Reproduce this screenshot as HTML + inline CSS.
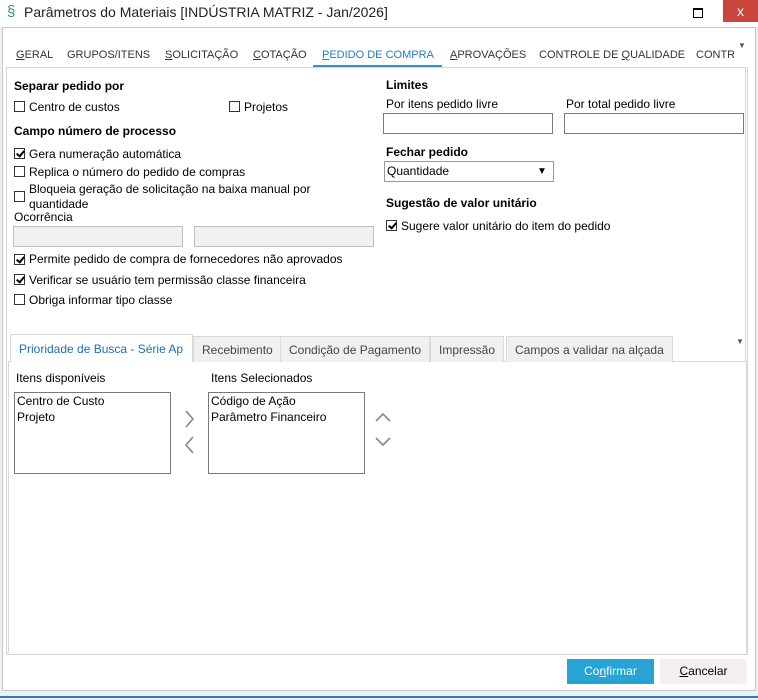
<!DOCTYPE html>
<html><head><meta charset="utf-8"><style>
*{margin:0;padding:0;box-sizing:border-box}
body{width:758px;height:700px;background:#f0f0f0;position:relative;overflow:hidden;font-family:"Liberation Sans",sans-serif;font-size:12px;color:#000}
.a{position:absolute;white-space:nowrap;line-height:16px}
.b{font-weight:bold}
.cb{position:absolute;width:11px;height:11px;border:1px solid #333;background:#fff}
.cb.k::after{content:"";position:absolute;left:3px;top:0px;width:3px;height:6px;border:solid #000;border-width:0 2px 2px 0;transform:rotate(40deg)}
.in{position:absolute;border:1px solid #7a7a7a;background:#fff}
.dis{position:absolute;border:1px solid #bfbfbf;background:#f0f0f0}
.tab{position:absolute;top:48px;color:#333;font-size:11px;white-space:nowrap;line-height:14px}
.st{position:absolute;top:336px;height:26px;border:1px solid #d9d9d9;border-bottom:none;background:#f0f0f0;color:#444;line-height:26px;padding:0 8px}
u{text-decoration:underline}
</style></head><body>
<div style="position:absolute;left:0;top:0;width:758px;height:27px;background:#fff"></div>
<div class="a" style="left:7px;top:4px;color:#2a9d5c;font-size:15px">§</div>
<div class="a" style="left:24px;top:4px;font-size:14px;color:#222">Parâmetros do Materiais [INDÚSTRIA MATRIZ - Jan/2026]</div>
<div style="position:absolute;left:693px;top:8px;width:10px;height:10px;border:1px solid #000;border-top-width:2px"></div>
<div style="position:absolute;left:723px;top:0;width:35px;height:22px;background:#c8463c;color:#fff;text-align:center;line-height:22px;font-size:14px">x</div>
<div style="position:absolute;left:2px;top:27px;width:754px;height:664px;border:1px solid #c8c8c8;background:#fff"></div>
<div class="tab" style="left:16px"><u>G</u>ERAL</div>
<div class="tab" style="left:67px">GRUPOS/ITENS</div>
<div class="tab" style="left:165px"><u>S</u>OLICITAÇÃO</div>
<div class="tab" style="left:253px"><u>C</u>OTAÇÃO</div>
<div class="tab" style="left:322px;color:#1e7fc8"><u>P</u>EDIDO DE COMPRA</div>
<div style="position:absolute;left:313px;top:65px;width:129px;height:2px;background:#3a8fd6"></div>
<div class="tab" style="left:450px"><u>A</u>PROVAÇÕES</div>
<div class="tab" style="left:539px">CONTROLE DE <u>Q</u>UALIDADE</div>
<div class="tab" style="left:696px;width:38px;overflow:hidden">CONTR</div>
<div class="a" style="left:738px;top:38px;font-size:8px;color:#555">▼</div>
<div style="position:absolute;left:6px;top:67px;width:742px;height:588px;border:1px solid #d4d4d4;border-right:3px double #d4d4d4;border-bottom:3px double #d4d4d4"></div>

<div class="a b" style="left:14px;top:78px">Separar pedido por</div>
<div class="cb" style="left:14px;top:101px"></div><div class="a" style="left:29px;top:99px">Centro de custos</div>
<div class="cb" style="left:229px;top:101px"></div><div class="a" style="left:244px;top:99px">Projetos</div>
<div class="a b" style="left:14px;top:123px">Campo número de processo</div>
<div class="cb k" style="left:14px;top:148px"></div><div class="a" style="left:29px;top:146px">Gera numeração automática</div>
<div class="cb" style="left:14px;top:166px"></div><div class="a" style="left:29px;top:164px">Replica o número do pedido de compras</div>
<div class="cb" style="left:14px;top:191px"></div><div class="a" style="left:29px;top:181px">Bloqueia geração de solicitação na baixa manual por</div>
<div class="a" style="left:29px;top:196px">quantidade</div>
<div class="a" style="left:14px;top:209px">Ocorrência</div>
<div class="dis" style="left:13px;top:226px;width:170px;height:21px"></div>
<div class="dis" style="left:194px;top:226px;width:180px;height:21px"></div>
<div class="cb k" style="left:14px;top:254px"></div><div class="a" style="left:29px;top:251px">Permite pedido de compra de fornecedores não aprovados</div>
<div class="cb k" style="left:14px;top:274px"></div><div class="a" style="left:29px;top:272px">Verificar se usuário tem permissão classe financeira</div>
<div class="cb" style="left:14px;top:294px"></div><div class="a" style="left:29px;top:292px">Obriga informar tipo classe</div>

<div class="a b" style="left:386px;top:77px">Limites</div>
<div class="a" style="left:386px;top:96px">Por itens pedido livre</div>
<div class="a" style="left:566px;top:96px">Por total pedido livre</div>
<div class="in" style="left:383px;top:113px;width:170px;height:21px"></div>
<div class="in" style="left:564px;top:113px;width:180px;height:21px"></div>
<div class="a b" style="left:386px;top:144px">Fechar pedido</div>
<div class="in" style="left:384px;top:161px;width:170px;height:21px;border-color:#999"></div>
<div class="a" style="left:387px;top:163px">Quantidade</div>
<div class="a" style="left:537px;top:164px;font-size:10px">▼</div>
<div class="a b" style="left:386px;top:195px">Sugestão de valor unitário</div>
<div class="cb k" style="left:386px;top:220px"></div><div class="a" style="left:401px;top:218px">Sugere valor unitário do item do pedido</div>

<div style="position:absolute;left:8px;top:361px;width:739px;height:292px;border:1px solid #d9d9d9;border-bottom:none;background:#fff"></div>
<div style="position:absolute;left:10px;top:334px;width:183px;height:28px;border:1px solid #d9d9d9;border-bottom:none;background:#fff;color:#1e6fb8;line-height:28px;padding-left:8px">Prioridade de Busca - Série Ap</div>
<div class="st" style="left:193px">Recebimento</div>
<div class="st" style="left:280px">Condição de Pagamento</div>
<div class="st" style="left:430px">Impressão</div>
<div class="st" style="left:506px">Campos a validar na alçada</div>
<div class="a" style="left:736px;top:334px;font-size:8px;color:#555">▼</div>
<div class="a" style="left:16px;top:370px">Itens disponíveis</div>
<div class="a" style="left:211px;top:370px">Itens Selecionados</div>
<div class="in" style="left:14px;top:392px;width:157px;height:82px"></div>
<div class="a" style="left:17px;top:393px">Centro de Custo<br>Projeto</div>
<div class="in" style="left:208px;top:392px;width:157px;height:82px"></div>
<div class="a" style="left:211px;top:393px">Código de Ação<br>Parâmetro Financeiro</div>
<svg style="position:absolute;left:180px;top:408px" width="20" height="50" fill="none" stroke="#888" stroke-width="1.6"><path d="M6 3l7 8-7 8"/><path d="M13 29l-7 8 7 8"/></svg>
<svg style="position:absolute;left:372px;top:410px" width="24" height="40" fill="none" stroke="#888" stroke-width="1.6"><path d="M4 11l7-7 7 7"/><path d="M4 28l7 7 7-7"/></svg>

<div style="position:absolute;left:567px;top:659px;width:87px;height:25px;background:#27a3d4;color:#fff;text-align:center;line-height:25px;outline:1px dotted #d06030;outline-offset:-3px">Co<u>n</u>firmar</div>
<div style="position:absolute;left:660px;top:659px;width:87px;height:25px;background:#f3eff3;text-align:center;line-height:25px"><u>C</u>ancelar</div>
<div style="position:absolute;left:0;top:696px;width:758px;height:2px;background:#2a7bd0"></div>
</body></html>
